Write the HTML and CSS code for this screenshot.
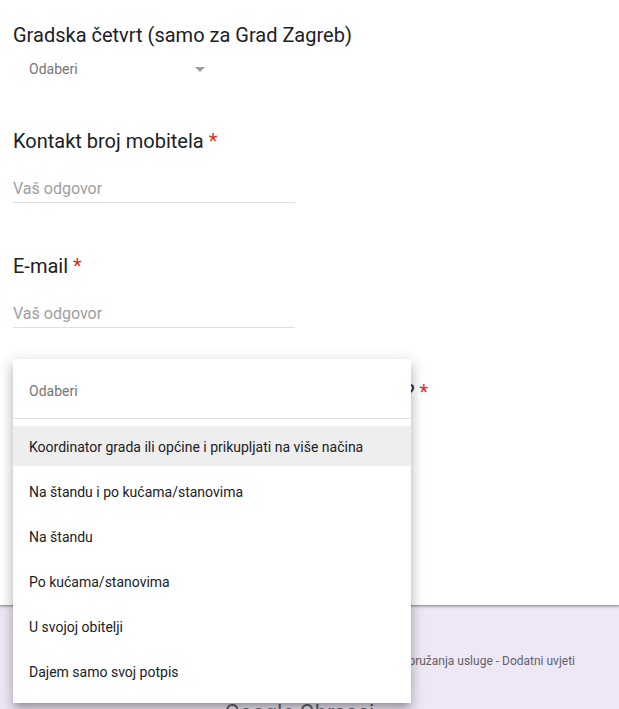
FILE: index.html
```html
<!DOCTYPE html>
<html lang="hr">
<head>
<meta charset="utf-8">
<title>Obrazac</title>
<link rel="stylesheet" href="styles.css">
</head>
<body>
<div class="page">
  <main class="card">
    <section class="q q-first">
      <div class="q-title">Gradska četvrt (samo za Grad Zagreb)</div>
      <div class="select">
        <span class="select-label">Odaberi</span>
        <span class="caret"></span>
      </div>
    </section>
    <section class="q q-second">
      <div class="q-title">Kontakt broj mobitela <span class="req">*</span></div>
      <div class="text-input">Vaš odgovor</div>
    </section>
    <section class="q q-third">
      <div class="q-title">E-mail <span class="req">*</span></div>
      <div class="text-input">Vaš odgovor</div>
    </section>
    <section class="q q-last">
      <div class="q-title">Na koji način ćete Vi sami prikupljati potpise? <span class="req">*</span></div>
      <div class="select">
        <span class="select-label">Odaberi</span>
        <span class="caret"></span>
      </div>
    </section>
  </main>
  <footer class="footer">
    <div class="footer-text"><span>Ovaj sadržaj nije izradio niti podržava Google. Prijavi zlouporabu - Uvjeti pružanja usluge - Dodatni uvjeti</span></div>
    <div class="brand">Google Obrasci</div>
  </footer>

  <div class="menu">
    <div class="menu-head">Odaberi</div>
    <ul class="menu-list">
      <li class="menu-item active">Koordinator grada ili općine i prikupljati na više načina</li>
      <li class="menu-item">Na štandu i po kućama/stanovima</li>
      <li class="menu-item">Na štandu</li>
      <li class="menu-item">Po kućama/stanovima</li>
      <li class="menu-item">U svojoj obitelji</li>
      <li class="menu-item">Dajem samo svoj potpis</li>
    </ul>
  </div>
</div>
</body>
</html>
```

FILE: styles.css
```css
* { box-sizing: border-box; }
html, body {
  margin: 0;
  padding: 0;
  background: #ede7f6;
  font-family: Roboto, "Liberation Sans", Arial, sans-serif;
  overflow: hidden;
}
.page {
  position: relative;
  width: 619px;
  height: 709px;
}
.card {
  background: #ffffff;
  padding: 23px 13px 169px;
  box-shadow: 0 1px 2px rgba(0,0,0,0.3), 0 1px 3px 1px rgba(0,0,0,0.15);
  position: relative;
  z-index: 1;
}
.q { margin-top: 52px; }
.q-first { margin-top: 0; }
.q-second { margin-top: 50px; }
.q-third { margin-top: 51px; }
.q-title {
  font-size: 20px;
  line-height: 24px;
  color: #202124;
  white-space: nowrap;
}
.req { color: #d93025; }
.select {
  margin-top: 12px;
  width: 192px;
  height: 20px;
  padding-left: 16px;
  display: flex;
  align-items: center;
  justify-content: space-between;
}
.select-label {
  font-size: 14px;
  line-height: 20px;
  color: #757575;
}
.caret {
  width: 0;
  height: 0;
  border-left: 5px solid transparent;
  border-right: 5px solid transparent;
  border-top: 5px solid #9e9e9e;
}
.text-input {
  margin-top: 24px;
  width: 282px;
  font-size: 16px;
  line-height: 24px;
  color: #9e9e9e;
  padding-bottom: 1px;
  border-bottom: 1px solid #e0e0e0;
}
.footer {
  padding-top: 48px;
}
.footer-text {
  display: flex;
  justify-content: flex-end;
  padding-right: 44px;
  font-size: 12px;
  line-height: 16px;
  color: #5f6368;
  white-space: nowrap;
}
.brand {
  margin-top: 30px;
  text-align: center;
  padding-right: 20px;
  font-size: 22px;
  line-height: 28px;
  color: #5f6368;
}
.menu {
  position: absolute;
  left: 13px;
  top: 359px;
  width: 398px;
  background: #ffffff;
  padding: 8px 0 7px;
  z-index: 5;
  box-shadow: 0 5px 5px -3px rgba(0,0,0,0.2), 0 8px 10px 1px rgba(0,0,0,0.14), 0 3px 14px 2px rgba(0,0,0,0.12);
}
.menu-head {
  height: 52px;
  line-height: 48px;
  padding: 0 16px 4px;
  font-size: 14px;
  color: #757575;
  border-bottom: 1px solid #e0e0e0;
}
.menu-list {
  list-style: none;
  margin: 0;
  padding: 7px 0 0;
}
.menu-item {
  height: 40px;
  line-height: 39px;
  margin-bottom: 5px;
  padding: 2px 16px 0;
  font-size: 14px;
  color: #202124;
  white-space: nowrap;
}
.menu-item.active { background: #eeeeee; }
```
